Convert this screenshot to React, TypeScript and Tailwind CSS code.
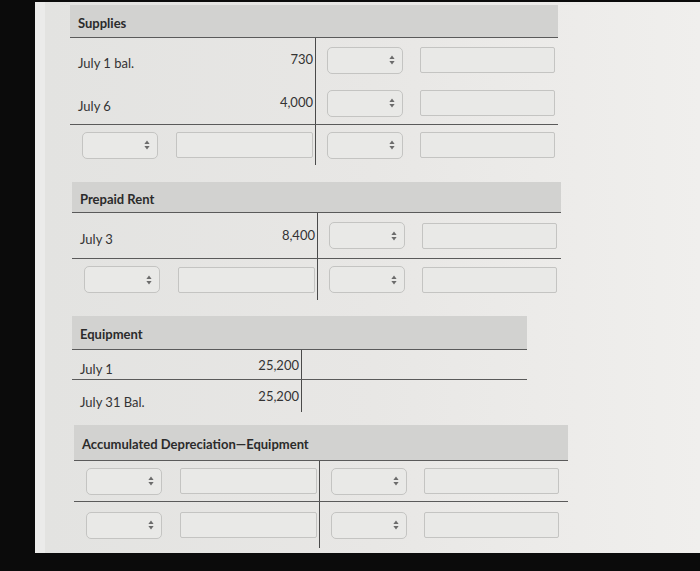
import React from "react";

const Arrows = () => (
  <svg width="6" height="10" viewBox="0 0 6 10" className="shrink-0">
    <path d="M3 0.5 L5.6 4 L0.4 4 Z" fill="#6b6b6b" />
    <path d="M3 9.5 L5.6 6 L0.4 6 Z" fill="#6b6b6b" />
  </svg>
);

const Select = () => (
  <div className="w-[76px] h-[27px] rounded-[5px] border border-[#c4c4c2] bg-[#e9e9e7] flex items-center justify-end pr-[7px]">
    <Arrows />
  </div>
);

const Input = ({ w = "w-[135px]" }: { w?: string }) => (
  <div className={`${w} h-[26px] rounded-[2px] border border-[#c4c4c2] bg-[#e9e9e7]`} />
);

const Header = ({ title }: { title: string }) => (
  <div className="bg-[#d2d2d0] border-b border-[#5a5a5a] pl-2 flex items-center h-full">
    <span className="text-[13px] font-bold text-[#2b2b2b] mt-[5px]">{title}</span>
  </div>
);

const AmountRow = ({ label, amount, h, line }: { label: string; amount: string; h: string; line?: boolean }) => (
  <div className={`flex ${h} ${line ? "border-b border-[#5a5a5a]" : ""}`}>
    <div className="w-[246px] flex items-center justify-between pl-2 pr-[2px] border-r border-[#4a4a4a]">
      <span className="text-[13px] text-[#333] mt-2">{label}</span>
      <span className="text-[13px] text-[#333]">{amount}</span>
    </div>
    <div className="flex-1 flex items-center pl-[11px] gap-[17px]">
      <Select />
      <Input />
    </div>
  </div>
);

const BlankRow = ({ h, line }: { h: string; line?: boolean }) => (
  <div className={`flex ${h} ${line ? "border-b border-[#5a5a5a]" : ""}`}>
    <div className="w-[246px] flex items-center pl-3 gap-[18px] border-r border-[#4a4a4a]">
      <Select />
      <Input w="w-[137px]" />
    </div>
    <div className="flex-1 flex items-center pl-[11px] gap-[17px]">
      <Select />
      <Input />
    </div>
  </div>
);

export default function App() {
  return (
    <div className="w-[700px] h-[571px] bg-[#0b0b0b] pt-[2px] overflow-hidden" style={{ fontFamily: "Lato, 'Liberation Sans', sans-serif" }}>
      <div className="ml-[35px] h-[551px] bg-gradient-to-r from-[#e3e3e1] via-[#e8e7e5] to-[#f0efed] border-l-[10px] border-[#ebebea] pt-[3px] pl-[25px] flex flex-col">
        {/* Supplies */}
        <div className="w-[488px]">
          <div className="h-[33px]"><Header title="Supplies" /></div>
          <AmountRow label="July 1 bal." amount="730" h="h-[44px]" />
          <AmountRow label="July 6" amount="4,000" h="h-[43px]" line />
          <BlankRow h="h-[40px]" />
        </div>

        {/* Prepaid Rent */}
        <div className="w-[489px] ml-[2px] mt-[17px]">
          <div className="h-[31px]"><Header title="Prepaid Rent" /></div>
          <AmountRow label="July 3" amount="8,400" h="h-[46px]" line />
          <BlankRow h="h-[41px]" />
        </div>

        {/* Equipment */}
        <div className="w-[455px] ml-[2px] mt-[16px]">
          <div className="h-[34px]"><Header title="Equipment" /></div>
          <div className="flex h-[30px] border-b border-[#5a5a5a]">
            <div className="w-[230px] flex items-center justify-between pl-2 pr-[2px] border-r border-[#4a4a4a]">
              <span className="text-[13px] text-[#333] mt-[10px]">July 1</span>
              <span className="text-[13px] text-[#333] mt-[3px]">25,200</span>
            </div>
          </div>
          <div className="flex h-[32px]">
            <div className="w-[230px] flex items-center justify-between pl-2 pr-[2px] border-r border-[#4a4a4a]">
              <span className="text-[13px] text-[#333] mt-[13px]">July 31 Bal.</span>
              <span className="text-[13px] text-[#333] mt-[1px]">25,200</span>
            </div>
          </div>
        </div>

        {/* Accumulated Depreciation */}
        <div className="w-[494px] ml-[4px] mt-[13px]">
          <div className="h-[36px]"><Header title="Accumulated Depreciation—Equipment" /></div>
          <BlankRow h="h-[41px]" line />
          <BlankRow h="h-[46px]" />
        </div>
      </div>
    </div>
  );
}
